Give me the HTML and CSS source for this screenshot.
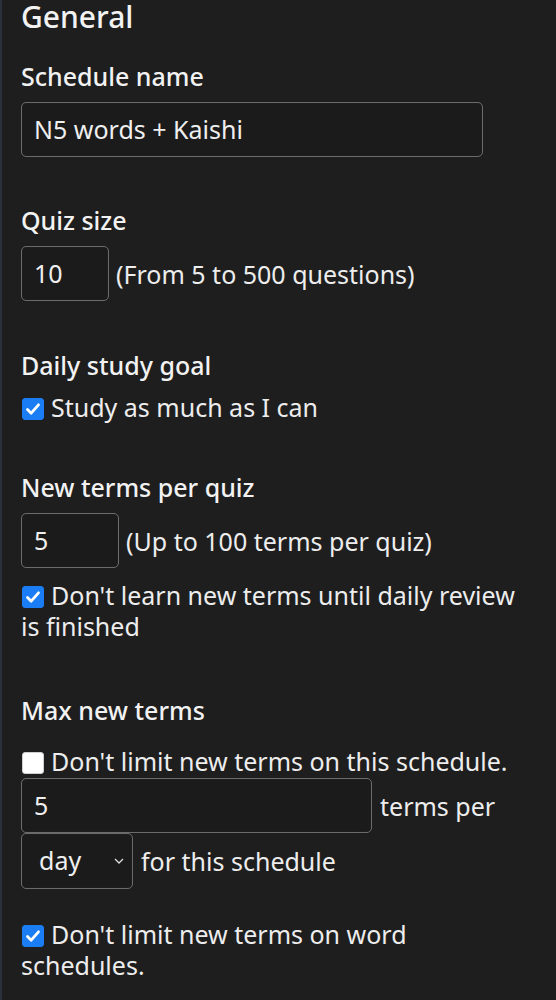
FILE: index.html
```html
<!DOCTYPE html>
<html lang="en">
<head>
<meta charset="utf-8">
<title>Schedule settings</title>
<link rel="stylesheet" href="styles.css">
</head>
<body>
<main class="panel">
  <h2 class="title">General</h2>

  <section class="field f-name">
    <div class="label">Schedule name</div>
    <div class="input wide">N5 words + Kaishi</div>
  </section>

  <section class="field f-quiz">
    <div class="label">Quiz size</div>
    <div class="row">
      <div class="input small">10</div>
      <span class="text">(From 5 to 500 questions)</span>
    </div>
  </section>

  <section class="field f-goal">
    <div class="label">Daily study goal</div>
    <div class="check-line"><span class="cb checked"><svg viewBox="0 0 22 22" width="22" height="22"><path d="M5.5 11.5 L9.2 15.2 L16.5 6.8" fill="none" stroke="#fff" stroke-width="2.8" stroke-linecap="round" stroke-linejoin="round"/></svg></span>Study as much as I can</div>
  </section>

  <section class="field f-new">
    <div class="label">New terms per quiz</div>
    <div class="row">
      <div class="input small2">5</div>
      <span class="text">(Up to 100 terms per quiz)</span>
    </div>
    <div class="check-line wrap"><span class="cb checked"><svg viewBox="0 0 22 22" width="22" height="22"><path d="M5.5 11.5 L9.2 15.2 L16.5 6.8" fill="none" stroke="#fff" stroke-width="2.8" stroke-linecap="round" stroke-linejoin="round"/></svg></span>Don't learn new terms until daily review is finished</div>
  </section>

  <section class="field f-max">
    <div class="label">Max new terms</div>
    <div class="check-line first"><span class="cb"></span>Don't limit new terms on this schedule.</div>
    <div class="flow">
      <div class="input medium">5</div>
      <span class="text">terms per</span>
      <div class="select">day<svg class="chev" viewBox="0 0 10 6" width="10" height="6"><path d="M1 1 L5 5 L9 1" fill="none" stroke="#ddd" stroke-width="1.3"/></svg></div>
      <span class="text">for this schedule</span>
    </div>
    <div class="check-line wrap last"><span class="cb checked"><svg viewBox="0 0 22 22" width="22" height="22"><path d="M5.5 11.5 L9.2 15.2 L16.5 6.8" fill="none" stroke="#fff" stroke-width="2.8" stroke-linecap="round" stroke-linejoin="round"/></svg></span>Don't limit new terms on word schedules.</div>
  </section>
</main>
</body>
</html>
```

FILE: styles.css
```css
html, body {
  margin: 0;
  padding: 0;
  background: #1e1e1e;
}
body {
  font-family: "Noto Sans", "Open Sans", sans-serif;
  color: #ededed;
  border-left: 2px solid #2a313a;
  min-height: 1000px;
  box-sizing: border-box;
}
.panel {
  padding: 0 0 0 19px;
  width: 506px;
}
.title {
  margin: 0;
  font-size: 30px;
  line-height: 34px;
  font-weight: 500;
  color: #f2f2f2;
}
.field { margin: 0; }
.label {
  font-size: 25px;
  line-height: 32px;
  font-weight: 500;
  color: #f2f2f2;
  margin-bottom: 10px;
}
.f-name { margin-top: 26px; }
.f-quiz { margin-top: 47px; }
.f-goal { margin-top: 48px; }
.f-new { margin-top: 48px; }
.f-max { margin-top: 52px; }

.input, .select {
  box-sizing: border-box;
  height: 55px;
  border: 1.5px solid #6b6b6b;
  border-radius: 5px;
  background: #1b1b1b;
  box-shadow: inset 0 0 1px rgba(255,255,255,0.15);
  font-size: 25px;
  line-height: 52px;
  padding-left: 12px;
  color: #efefef;
}
.wide { width: 462px; }
.small { width: 88px; }
.small2 { width: 98px; }
.medium { width: 351px; }

.row {
  display: flex;
  align-items: center;
  gap: 7px;
}
.text {
  font-size: 25px;
  line-height: 32px;
}
.check-line {
  font-size: 25px;
  line-height: 32px;
  margin-top: 11px;
}
.f-goal .check-line { margin-top: 1px; }
.check-line.wrap { line-height: 31px; }
.f-new .check-line { margin-top: 12px; }
.f-max .check-line.first { margin-top: 19px; }
.f-max .check-line.last { margin-top: 30px; }
.cb {
  display: inline-block;
  box-sizing: border-box;
  width: 22px;
  height: 22px;
  border-radius: 3px;
  background: #fff;
  border: 1px solid #cfcfcf;
  vertical-align: -3px;
  margin: 0 7px 0 1px;
  position: relative;
}
.cb.checked {
  background: #1a7df4;
  border-color: #1a7df4;
}
.cb svg {
  position: absolute;
  left: -1px;
  top: -1px;
}
.flow {
  display: flex;
  flex-wrap: wrap;
  align-items: center;
  column-gap: 8px;
  row-gap: 0;
  margin-top: 1px;
}
.select {
  width: 112px;
  height: 56px;
  padding-left: 17px;
  line-height: 52px;
  position: relative;
}
.chev {
  position: absolute;
  right: 8px;
  top: 24px;
}
```
